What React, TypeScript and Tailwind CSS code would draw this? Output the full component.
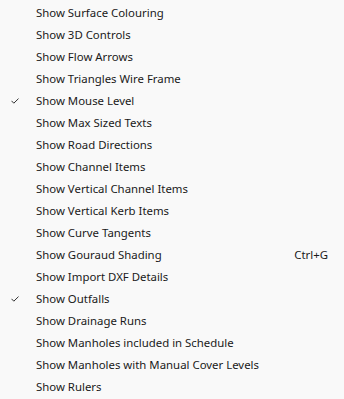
const items: { label: string; checked?: boolean; shortcut?: string }[] = [
  { label: 'Show Surface Colouring' },
  { label: 'Show 3D Controls' },
  { label: 'Show Flow Arrows' },
  { label: 'Show Triangles Wire Frame' },
  { label: 'Show Mouse Level', checked: true },
  { label: 'Show Max Sized Texts' },
  { label: 'Show Road Directions' },
  { label: 'Show Channel Items' },
  { label: 'Show Vertical Channel Items' },
  { label: 'Show Vertical Kerb Items' },
  { label: 'Show Curve Tangents' },
  { label: 'Show Gouraud Shading', shortcut: 'Ctrl+G' },
  { label: 'Show Import DXF Details' },
  { label: 'Show Outfalls', checked: true },
  { label: 'Show Drainage Runs' },
  { label: 'Show Manholes included in Schedule' },
  { label: 'Show Manholes with Manual Cover Levels' },
  { label: 'Show Rulers' },
];

export default function App() {
  return (
    <div
      className="w-[344px] h-[399px] bg-[#f9f9f9] pt-[2px] text-[11.4px] text-[#1a1a1a]"
      style={{ fontFamily: '"Noto Sans", "Open Sans", sans-serif' }}
    >
      {items.map((item) => (
        <div key={item.label} className="flex items-center h-[22px]">
          <div className="w-[36px] flex justify-center shrink-0">
            {item.checked && (
              <svg width="8" height="6" viewBox="0 0 8 6" className="ml-[-7px]">
                <path d="M0.5 2.8 L2.8 5.2 L7.5 0.6" fill="none" stroke="#333" strokeWidth="1" />
              </svg>
            )}
          </div>
          <span className="flex-1 whitespace-nowrap">{item.label}</span>
          {item.shortcut && <span className="pr-[16px]">{item.shortcut}</span>}
        </div>
      ))}
    </div>
  );
}
